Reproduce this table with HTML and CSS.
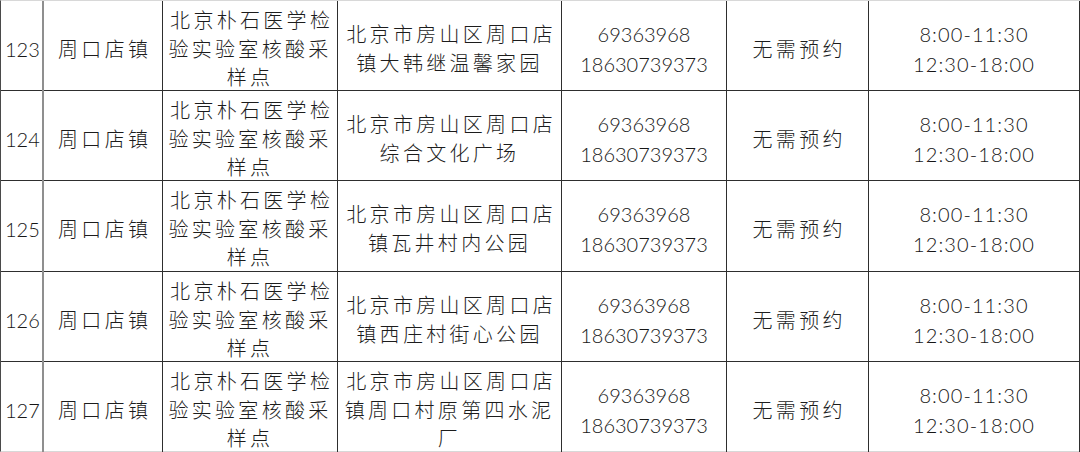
FILE: index.html
```html
<!DOCTYPE html>
<html lang="zh-CN">
<head>
<meta charset="utf-8">
<title>核酸采样点</title>
<link rel="stylesheet" href="styles.css">
</head>
<body>
<div class="table">
  <div class="row">
    <div class="cell num no">123</div>
    <div class="cell cn">周口店镇</div>
    <div class="cell cn">北京朴石医学检<br>验实验室核酸采<br>样点</div>
    <div class="cell cn">北京市房山区周口店<br>镇大韩继温馨家园</div>
    <div class="cell num">69363968<br>18630739373</div>
    <div class="cell cn">无需预约</div>
    <div class="cell num time">8:00-11:30<br>12:30-18:00</div>
  </div>
  <div class="row">
    <div class="cell num no">124</div>
    <div class="cell cn">周口店镇</div>
    <div class="cell cn">北京朴石医学检<br>验实验室核酸采<br>样点</div>
    <div class="cell cn">北京市房山区周口店<br>综合文化广场</div>
    <div class="cell num">69363968<br>18630739373</div>
    <div class="cell cn">无需预约</div>
    <div class="cell num time">8:00-11:30<br>12:30-18:00</div>
  </div>
  <div class="row tall">
    <div class="cell num no">125</div>
    <div class="cell cn">周口店镇</div>
    <div class="cell cn">北京朴石医学检<br>验实验室核酸采<br>样点</div>
    <div class="cell cn">北京市房山区周口店<br>镇瓦井村内公园</div>
    <div class="cell num">69363968<br>18630739373</div>
    <div class="cell cn">无需预约</div>
    <div class="cell num time">8:00-11:30<br>12:30-18:00</div>
  </div>
  <div class="row">
    <div class="cell num no">126</div>
    <div class="cell cn">周口店镇</div>
    <div class="cell cn">北京朴石医学检<br>验实验室核酸采<br>样点</div>
    <div class="cell cn">北京市房山区周口店<br>镇西庄村街心公园</div>
    <div class="cell num">69363968<br>18630739373</div>
    <div class="cell cn">无需预约</div>
    <div class="cell num time">8:00-11:30<br>12:30-18:00</div>
  </div>
  <div class="row">
    <div class="cell num no">127</div>
    <div class="cell cn">周口店镇</div>
    <div class="cell cn">北京朴石医学检<br>验实验室核酸采<br>样点</div>
    <div class="cell cn">北京市房山区周口店<br>镇周口村原第四水泥<br>厂</div>
    <div class="cell num">69363968<br>18630739373</div>
    <div class="cell cn">无需预约</div>
    <div class="cell num time">8:00-11:30<br>12:30-18:00</div>
  </div>
</div>
</body>
</html>
```

FILE: styles.css
```css
html, body {
  margin: 0;
  padding: 0;
  background: #ffffff;
}

body {
  width: 1080px;
  height: 452px;
  overflow: hidden;
  color: #1c1c1c;
  font-family: "Noto Sans CJK SC", sans-serif;
}

.table {
  border-top: 1px solid #d8d8d8;
  border-left: 1px solid #4a4a4a;
  border-bottom: 1px solid #d8d8d8;
}

.row {
  display: grid;
  grid-template-columns: 43px 119px 175px 224px 165px 142px 211px;
  height: 90px;
  border-bottom: 1px solid #2e2e2e;
  box-sizing: border-box;
}

.row.tall {
  height: 91px;
}

.row:last-child {
  border-bottom: none;
  height: 89px;
}

.cell {
  display: flex;
  align-items: center;
  justify-content: center;
  text-align: center;
  border-right: 1px solid #2e2e2e;
  padding-top: 5px;
  box-sizing: border-box;
}

.cell.no {
  border-right: 2px solid #8f8f8f;
  justify-content: flex-start;
  padding-left: 4px;
}

.cn {
  font-family: "Noto Sans CJK SC", sans-serif;
  font-weight: 300;
  font-size: 20px;
  letter-spacing: 3.3px;
  line-height: 28.5px;
  text-indent: 3.3px;
}

.num {
  font-family: Lato, "Liberation Serif", sans-serif;
  font-weight: 300;
  font-size: 20px;
  line-height: 30px;
  color: #161616;
}

.time {
  letter-spacing: 1.1px;
}
```
